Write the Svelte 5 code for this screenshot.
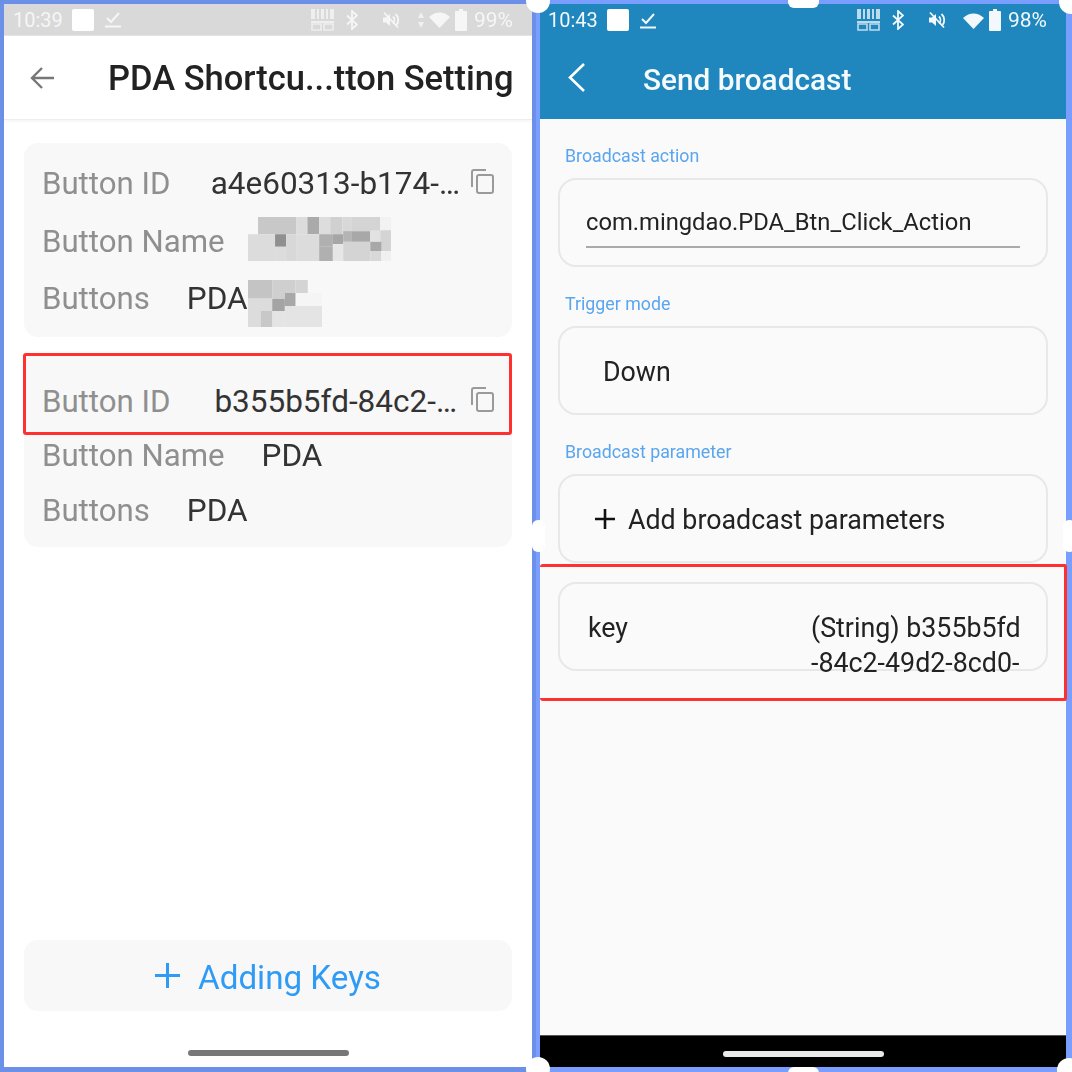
<script>
    const nameBlocks = [
        [744, 245, 114, 52, "#c8c8c8"], [858, 245, 34, 52, "#dcdcdc"], [892, 245, 35, 52, "#aaaaaa"],
        [927, 245, 33, 52, "#dddddd"], [960, 245, 37, 52, "#d0d0d0"], [997, 245, 28, 52, "#d8d8d8"],
        [1025, 245, 85, 43, "#d4d4d4"], [1110, 245, 32, 40, "#f2f2f2"],
        [714, 297, 81, 81, "#dcdcdc"], [795, 297, 33, 38, "#909090"], [795, 335, 33, 43, "#dcdcdc"],
        [828, 297, 30, 81, "#d8d8d8"], [858, 297, 69, 81, "#dcdcdc"], [927, 297, 41, 38, "#b0b0b0"],
        [927, 335, 41, 43, "#b0b0b0"], [968, 297, 31, 30, "#a6a6a6"], [968, 327, 31, 51, "#e6e6e6"],
        [999, 288, 26, 32, "#b4b4b4"], [1025, 288, 55, 32, "#a8a8a8"], [999, 320, 81, 58, "#d4d4d4"],
        [1080, 285, 30, 35, "#e2e2e2"], [1110, 285, 32, 63, "#d4d4d4"], [1080, 320, 33, 28, "#a8a8a8"],
        [1080, 348, 33, 30, "#d8d8d8"], [1113, 348, 29, 30, "#f0f0f0"],
    ];
    const buttonBlocks = [
        [717, 432, 73, 56, "#c4c4c4"], [790, 432, 70, 39, "#cfcfcf"], [860, 432, 37, 39, "#d4d4d4"],
        [790, 471, 38, 18, "#cfcfcf"], [860, 471, 80, 39, "#f5f5f5"], [717, 488, 73, 37, "#dcdcdc"],
        [790, 489, 38, 36, "#a4a4a4"], [828, 471, 32, 39, "#a8a8a8"], [828, 510, 112, 63, "#e4e4e4"],
        [790, 525, 38, 48, "#e4e4e4"], [717, 525, 38, 48, "#dcdcdc"], [755, 525, 35, 48, "#c8c8c8"],
    ];
</script>

{#snippet statusIcons(showArrows, percent)}
    <svg class="barcode" width="23" height="22" viewBox="0 0 23 22" fill="currentColor">
        <rect x="0" y="0" width="4" height="10" />
        <rect x="6" y="0" width="2" height="10" />
        <rect x="10" y="0" width="3" height="10" />
        <rect x="15" y="0" width="2" height="10" />
        <rect x="19" y="0" width="4" height="10" />
        <path d="M0 12h23v2H0z" />
        <path d="M1 15h9v6H1zM13 15h9v6h-9z" fill="none" stroke="currentColor" stroke-width="1.6" />
    </svg>
    <svg class="bt" width="12" height="20" viewBox="0 0 12 20" fill="none" stroke="currentColor" stroke-width="1.8">
        <path d="M1 5.5l10 9-5 4.5V1l5 4.5-10 9" />
    </svg>
    <svg class="mute" width="18" height="18" viewBox="0 0 18 18" fill="none" stroke="currentColor" stroke-width="1.8">
        <path d="M1 6.5h3l4-3.5v12l-4-3.5H1z" fill="currentColor" stroke="none" />
        <path d="M11 5.5a5 5 0 0 1 0 7M13.5 3a8 8 0 0 1 1 11" />
        <path d="M2 1.5l14 15" />
    </svg>
    {#if showArrows}
        <svg class="arrows" width="6" height="16" viewBox="0 0 6 16" fill="currentColor">
            <path d="M3 0l3 6H0zM3 16l3-6H0z" />
        </svg>
    {/if}
    <svg class="wifi" width="21" height="17" viewBox="0 0 20 16" fill="currentColor">
        <path d="M0 5.5Q10-3 20 5.5L10 16z" />
    </svg>
    <svg class="battery" width="12" height="22" viewBox="0 0 12 22" fill="currentColor">
        <path d="M4 0h4v2h3a1 1 0 0 1 1 1v18a1 1 0 0 1-1 1H1a1 1 0 0 1-1-1V3a1 1 0 0 1 1-1h3z" />
    </svg>
    <span class="percent">{percent}</span>
{/snippet}

{#snippet statusLeft(time)}
    <span class="time">{time}</span>
    <span class="square"></span>
    <svg class="check" width="16" height="17" viewBox="0 0 16 17" fill="none" stroke="currentColor" stroke-width="2">
        <path d="M2 7l4 4 8-9" />
        <path d="M0 15.5h16" />
    </svg>
{/snippet}

{#snippet copyIcon()}
    <svg class="copy" width="23" height="25" viewBox="0 0 23 25" fill="none" stroke="#9a9a9a" stroke-width="2">
        <path d="M1 18V3a2 2 0 0 1 2-2h12" />
        <rect x="6" y="6" width="16" height="18" rx="2" />
    </svg>
{/snippet}

<div class="screen">
    <section class="phone light">
        <div class="status">
            <div class="status-left">{@render statusLeft("10:39")}</div>
            <div class="status-right">{@render statusIcons(true, "99%")}</div>
        </div>
        <header class="bar">
            <svg class="back" width="24" height="22" viewBox="0 0 24 22" fill="none" stroke="#777" stroke-width="2.4">
                <path d="M24 11H2M12 1L2 11l10 10" />
            </svg>
            <h1>PDA Shortcu...tton Setting</h1>
        </header>
        <main class="list">
            <div class="card first">
                <div class="row">
                    <span class="label">Button ID</span>
                    <span class="value id">a4e60313-b174-…</span>
                    {@render copyIcon()}
                </div>
                <div class="row">
                    <span class="label">Button Name</span>
                    <svg class="mosaic name" width="143" height="44" viewBox="714 245 428 133" preserveAspectRatio="none">
                        {#each nameBlocks as b}
                            <rect x={b[0]} y={b[1]} width={b[2]} height={b[3]} fill={b[4]} />
                        {/each}
                    </svg>
                </div>
                <div class="row">
                    <span class="label">Buttons</span>
                    <span class="value">PDA</span>
                    <svg class="mosaic pda" width="74" height="47" viewBox="717 432 223 141" preserveAspectRatio="none">
                        {#each buttonBlocks as b}
                            <rect x={b[0]} y={b[1]} width={b[2]} height={b[3]} fill={b[4]} />
                        {/each}
                    </svg>
                </div>
            </div>
            <div class="card second">
                <div class="row">
                    <span class="label">Button ID</span>
                    <span class="value id">b355b5fd-84c2-…</span>
                    {@render copyIcon()}
                </div>
                <div class="row">
                    <span class="label">Button Name</span>
                    <span class="value">PDA</span>
                </div>
                <div class="row">
                    <span class="label">Buttons</span>
                    <span class="value">PDA</span>
                </div>
            </div>
            <button class="add-keys">
                <svg width="25" height="25" viewBox="0 0 25 25" stroke="#2f9bf4" stroke-width="3">
                    <path d="M12.5 0v25M0 12.5h25" />
                </svg>
                <span>Adding Keys</span>
            </button>
        </main>
        <div class="nav">
            <span class="home"></span>
        </div>
    </section>

    <section class="phone dark">
        <div class="blue-top">
            <div class="status">
                <div class="status-left">{@render statusLeft("10:43")}</div>
                <div class="status-right">{@render statusIcons(false, "98%")}</div>
            </div>
            <header class="bar">
                <svg class="back" width="17" height="29" viewBox="0 0 17 29" fill="none" stroke="#fff" stroke-width="2.6">
                    <path d="M16 1L2 14.5 16 28" />
                </svg>
                <h1>Send broadcast</h1>
            </header>
        </div>
        <main class="form">
            <div class="field">
                <span class="caption">Broadcast action</span>
                <div class="box">
                    <div class="input">com.mingdao.PDA_Btn_Click_Action</div>
                </div>
            </div>
            <div class="field">
                <span class="caption">Trigger mode</span>
                <div class="box down">Down</div>
            </div>
            <div class="field params">
                <span class="caption">Broadcast parameter</span>
                <div class="box add">
                    <svg width="20" height="20" viewBox="0 0 20 20" stroke="#111" stroke-width="2.6">
                        <path d="M10 0v20M0 10h20" />
                    </svg>
                    <span>Add broadcast parameters</span>
                </div>
            </div>
            <div class="box param">
                <span class="key">key</span>
                <span class="string">(String) b355b5fd<br />-84c2-49d2-8cd0-</span>
            </div>
        </main>
        <div class="nav">
            <span class="home"></span>
        </div>
    </section>

    <!-- annotations and selection handles drawn over the screenshot -->
    <div class="mark mark-left"></div>
    <div class="mark mark-right"></div>
    <span class="handle corner tl"></span>
    <span class="handle corner tr"></span>
    <span class="handle corner bl"></span>
    <span class="handle corner br"></span>
    <span class="handle top"></span>
    <span class="handle bottom"></span>
    <span class="handle side sl"></span>
    <span class="handle side sr"></span>
</div>

<style>
    :global(body) {
        margin: 0;
        background: #7a9eff;
    }

    .screen {
        position: relative;
        width: 1072px;
        height: 1072px;
        display: flex;
        overflow: hidden;
        box-sizing: border-box;
        padding: 4px 6px 5px 4px;
        gap: 8px;
        font-family: Roboto, "Liberation Sans", sans-serif;
        background: linear-gradient(to right, #6c8fe8 0, #6c8fe8 536px, #7a9eff 536px);
    }

    .phone {
        display: flex;
        flex-direction: column;
        min-width: 0;
        filter: blur(0.6px);
    }

    .light {
        width: 528px;
        background: #fff;
    }

    .dark {
        width: 526px;
        background: #fafafa;
    }

    .status {
        height: 31px;
        flex: none;
        display: flex;
        align-items: center;
        justify-content: space-between;
        padding-right: 19px;
        font-size: 20px;
    }

    .light .status {
        background: #d9d9d9;
        color: #f6f6f6;
        padding-left: 9px;
        border-bottom: 1px solid #e4e4e4;
    }

    .dark .status {
        color: #f2f8fb;
        padding-left: 8px;
        height: 32px;
    }

    .status-left,
    .status-right {
        display: flex;
        align-items: center;
    }

    .time {
        width: 51px;
    }

    .square {
        width: 22px;
        height: 22px;
        border-radius: 2px;
        background: #fff;
        margin-left: 8px;
        margin-right: 11px;
    }

    .barcode {
        opacity: 0.75;
    }

    .bt {
        margin-left: 12px;
    }

    .mute {
        margin-left: 24px;
    }

    .arrows {
        margin-left: 18px;
        opacity: 0.8;
    }

    .wifi {
        margin-left: 5px;
    }

    .dark .wifi {
        margin-left: 17px;
    }

    .battery {
        margin-left: 5px;
    }

    .percent {
        margin-left: 7px;
        font-size: 21px;
    }

    .bar {
        height: 83px;
        flex: none;
        display: flex;
        align-items: center;
    }

    .light .bar {
        padding-left: 26px;
        border-bottom: 1px solid #eee;
        box-shadow: 0 2px 3px rgba(0, 0, 0, 0.04);
    }

    .dark .bar {
        padding-left: 28px;
        padding-top: 3px;
        height: 80px;
    }

    .dark .back {
        margin-top: -3px;
    }

    h1 {
        margin: 0;
        font-weight: 500;
        white-space: nowrap;
    }

    .light h1 {
        font-size: 34.5px;
        color: #222;
        margin-left: 54px;
    }

    .dark h1 {
        font-size: 29.8px;
        color: #f4fafd;
        margin-left: 58px;
    }

    .blue-top {
        background: #1f87bd;
    }

    .list {
        flex: 1;
        display: flex;
        flex-direction: column;
        padding: 23px 20px 0;
    }

    .card {
        height: 194px;
        flex: none;
        box-sizing: border-box;
        background: #f8f8f8;
        border-radius: 14px;
        padding: 0 18px;
        margin-bottom: 16px;
    }

    .card.first {
        padding-top: 12px;
    }

    .card.first .row {
        height: 57.5px;
    }

    .card.second {
        padding-top: 21px;
    }

    .card.second .row {
        height: 54.5px;
    }

    .card.second .copy {
        margin-left: 14px;
    }

    .row {
        display: flex;
        align-items: center;
    }

    .label {
        font-size: 31.2px;
        color: #8f8f8f;
        white-space: nowrap;
    }

    .value {
        font-size: 31.5px;
        color: #333;
        margin-left: 37px;
        white-space: nowrap;
    }

    .value.id {
        margin-left: auto;
    }

    .copy {
        flex: none;
        margin-left: 11px;
        margin-top: -4px;
    }

    .mosaic {
        flex: none;
    }

    .mosaic.name {
        margin-left: 23px;
        margin-top: -4px;
    }

    .mosaic.pda {
        margin-top: 10px;
    }

    .add-keys {
        margin-top: auto;
        height: 71px;
        flex: none;
        border: none;
        border-radius: 14px;
        background: #f8f8f8;
        display: flex;
        align-items: center;
        justify-content: center;
        gap: 18px;
        padding: 3px 0 0;
        font-family: inherit;
        font-size: 33.2px;
        color: #2f9bf4;
    }

    .add-keys svg {
        margin-top: -4px;
    }

    .nav {
        flex: none;
        display: flex;
        justify-content: center;
    }

    .light .nav {
        height: 56px;
        padding-top: 39px;
        box-sizing: border-box;
    }

    .dark .nav {
        height: 32px;
        background: #000;
        padding-top: 15px;
        box-sizing: border-box;
        border-top: 1px solid #555;
    }

    .home {
        width: 161px;
        height: 6px;
        border-radius: 3px;
    }

    .light .home {
        background: #777;
    }

    .dark .home {
        background: #eaeaea;
    }

    .form {
        flex: 1;
        display: flex;
        flex-direction: column;
        padding: 25px 18px 0;
    }

    .field {
        display: flex;
        flex-direction: column;
        margin-bottom: 25px;
    }

    .field.params {
        margin-bottom: 19px;
    }

    .caption {
        height: 24px;
        line-height: 24px;
        margin-bottom: 10px;
        padding-left: 7px;
        font-size: 17.8px;
        color: #5aa5ee;
    }

    .box {
        height: 89px;
        flex: none;
        box-sizing: border-box;
        border: 2px solid #e8e8e8;
        border-radius: 18px;
        color: #222;
        font-size: 26.8px;
    }

    .input {
        margin: 28px 26px 0;
        height: 38px;
        line-height: 29px;
        border-bottom: 2px solid #aaa;
        box-sizing: content-box;
        font-size: 23.75px;
    }

    .down {
        display: flex;
        align-items: center;
        padding: 3px 0 0 43px;
    }

    .add {
        display: flex;
        align-items: center;
        gap: 13px;
        padding: 3px 0 0 35px;
    }

    .add svg {
        margin-top: -3px;
    }

    .param {
        display: flex;
        align-items: flex-start;
        padding: 27px 0 0 28px;
        line-height: 35px;
    }

    .key {
        width: 223px;
    }

    .string {
        white-space: nowrap;
    }

    .mark {
        position: absolute;
        box-sizing: border-box;
        border: 3px solid #ff3030;
        border-radius: 3px;
    }

    .mark-left {
        left: 23px;
        top: 353px;
        width: 489px;
        height: 82px;
    }

    .mark-right {
        left: 540px;
        top: 564px;
        width: 527px;
        height: 137px;
        border-left: none;
    }

    .handle {
        position: absolute;
        background: #fff;
    }

    .corner {
        width: 24px;
        height: 24px;
        border-radius: 50%;
    }

    .tl {
        left: 526px;
        top: -11px;
    }

    .tr {
        left: 1059px;
        top: -10px;
    }

    .bl {
        left: 526px;
        top: 1057px;
    }

    .br {
        left: 1057px;
        top: 1058px;
    }

    .top,
    .bottom {
        left: 788px;
        width: 31px;
        height: 16px;
        border-radius: 6px;
    }

    .top {
        top: -8px;
    }

    .bottom {
        top: 1067px;
    }

    .side {
        top: 520px;
        width: 13px;
        height: 32px;
        border-radius: 6px;
    }

    .sl {
        left: 532px;
    }

    .sr {
        left: 1063px;
    }
</style>
